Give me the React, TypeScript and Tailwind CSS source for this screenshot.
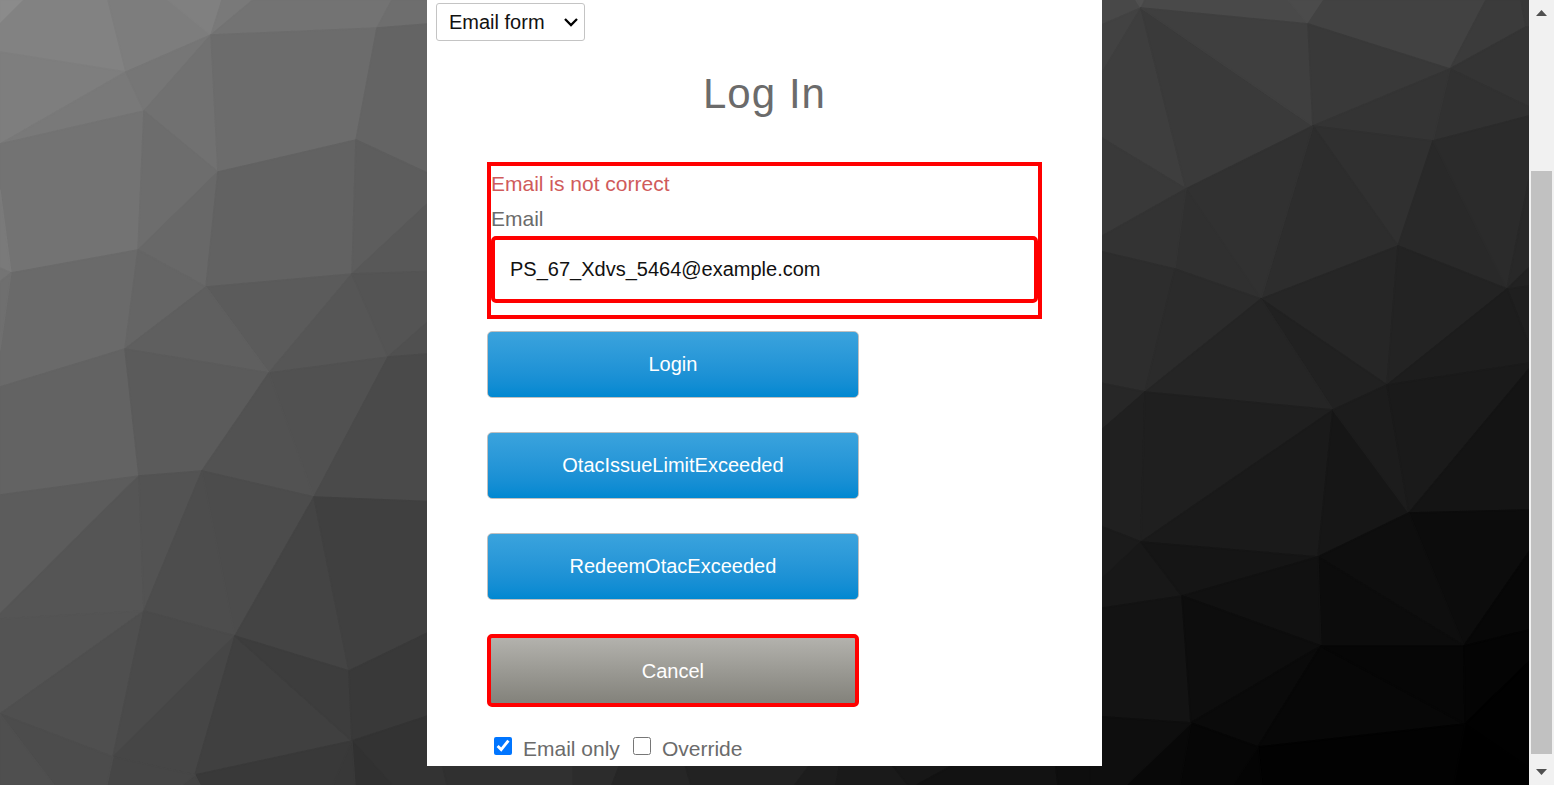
import { useState } from "react";

type Facet = [points: string, fill: string];

const facets: Facet[] = [
  ["0,0 24,0 0,24", "#8b8b8b"],
  ["24,0 108,0 126,72 0,52 0,24", "#828282"],
  ["108,0 168,0 211,35 126,72", "#7d7d7d"],
  ["168,0 222,0 211,35", "#808080"],
  ["222,0 253,0 211,35", "#797979"],
  ["253,0 392,0 377,28 211,35", "#737373"],
  ["392,0 440,0 440,23 377,28", "#6e6e6e"],
  ["0,52 126,72 0,144", "#7e7e7e"],
  ["0,144 126,72 144,111", "#797979"],
  ["126,72 211,35 144,111", "#767676"],
  ["144,111 211,35 218,172", "#717171"],
  ["211,35 377,28 356,140 218,172", "#6c6c6c"],
  ["377,28 440,23 440,179 356,140", "#646464"],
  ["0,144 144,111 138,250 11,273 0,190", "#737373"],
  ["0,190 11,273 0,268", "#7a7a7a"],
  ["0,268 11,273 0,282", "#747474"],
  ["144,111 218,172 138,250", "#6d6d6d"],
  ["138,250 218,172 206,287", "#686868"],
  ["218,172 356,140 352,274 206,287", "#626262"],
  ["356,140 440,179 440,192 352,274", "#5d5d5d"],
  ["352,274 440,192 440,271", "#585858"],
  ["11,273 138,250 125,349 0,387 0,350", "#6a6a6a"],
  ["0,282 11,273 0,350", "#6f6f6f"],
  ["138,250 206,287 125,349", "#656565"],
  ["206,287 352,274 269,373", "#5b5b5b"],
  ["125,349 206,287 269,373", "#5f5f5f"],
  ["352,274 388,357 269,373", "#565656"],
  ["352,274 440,271 440,311 388,357", "#545454"],
  ["388,357 440,311 440,353", "#505050"],
  ["269,373 388,357 314,497", "#515151"],
  ["0,387 125,349 139,476 0,495", "#636363"],
  ["125,349 269,373 202,471 139,476", "#5b5b5b"],
  ["269,373 314,497 202,471", "#525252"],
  ["388,357 440,353 440,502 314,497", "#4a4a4a"],
  ["0,495 139,476 0,614", "#5c5c5c"],
  ["139,476 144,611 0,619 0,614", "#555555"],
  ["139,476 202,471 144,611", "#535353"],
  ["202,471 314,497 235,636", "#4c4c4c"],
  ["202,471 235,636 144,611", "#4d4d4d"],
  ["314,497 349,671 235,636", "#444444"],
  ["314,497 440,502 440,627 349,671", "#404040"],
  ["0,619 144,611 0,714", "#545454"],
  ["0,714 144,611 113,757", "#4f4f4f"],
  ["144,611 235,636 113,757", "#4a4a4a"],
  ["113,757 235,636 195,775", "#464646"],
  ["235,636 352,741 195,775", "#404040"],
  ["235,636 349,671 352,741", "#3d3d3d"],
  ["349,671 440,627 440,712 352,741", "#393939"],
  ["352,741 440,712 447,785 392,785", "#333333"],
  ["352,741 392,785 355,785", "#313131"],
  ["352,741 355,785 333,785", "#383838"],
  ["195,775 352,741 333,785 200,785", "#393939"],
  ["195,775 200,785 182,785", "#434343"],
  ["113,757 195,775 182,785 107,785", "#464646"],
  ["0,714 113,757 107,785 54,785", "#4c4c4c"],
  ["0,714 54,785 0,785", "#4f4f4f"],
  ["440,712 440,755 447,785 573,785 573,712", "#303030"],
  ["573,712 640,712 612,785 573,785", "#2c2c2c"],
  ["640,712 670,712 691,785 612,785", "#262626"],
  ["670,712 850,712 795,785 691,785", "#222222"],
  ["850,712 836,785 795,785", "#1d1d1d"],
  ["850,712 908,785 836,785", "#1a1a1a"],
  ["850,712 1050,712 917,785 908,785", "#171717"],
  ["1050,712 1058,785 917,785", "#121212"],
  ["1050,712 1102,717 1102,785 1058,785", "#0e0e0e"],
  ["1090,0 1136,0 1141,8 1090,30", "#484848"],
  ["1136,0 1145,0 1141,8", "#505050"],
  ["1145,0 1288,0 1308,24 1141,8", "#494949"],
  ["1288,0 1324,0 1308,24", "#4b4b4b"],
  ["1324,0 1486,0 1450,69 1308,24", "#424242"],
  ["1486,0 1521,0 1526,27 1450,69", "#3b3b3b"],
  ["1521,0 1529,0 1529,27 1526,27", "#383838"],
  ["1526,27 1529,27 1529,107 1450,69", "#343434"],
  ["1450,69 1529,107 1529,116 1433,141", "#313131"],
  ["1090,30 1141,8 1090,93", "#424242"],
  ["1090,93 1141,8 1186,189 1090,131", "#3e3e3e"],
  ["1141,8 1313,126 1186,189", "#3a3a3a"],
  ["1141,8 1308,24 1313,126", "#3f3f3f"],
  ["1308,24 1450,69 1313,126", "#393939"],
  ["1313,126 1450,69 1433,141", "#343434"],
  ["1313,126 1433,141 1398,246", "#303030"],
  ["1313,126 1398,246 1261,299", "#2d2d2d"],
  ["1186,189 1313,126 1261,299", "#313131"],
  ["1186,189 1261,299 1175,269", "#303030"],
  ["1090,131 1186,189 1090,243", "#393939"],
  ["1090,243 1186,189 1175,269 1090,249", "#333333"],
  ["1090,249 1175,269 1145,392 1090,381", "#2d2d2d"],
  ["1175,269 1261,299 1145,392", "#2b2b2b"],
  ["1433,141 1507,289 1398,246", "#292929"],
  ["1433,141 1529,116 1529,180 1507,289", "#2b2b2b"],
  ["1529,180 1529,268 1507,289", "#282828"],
  ["1507,289 1529,268 1529,286", "#222222"],
  ["1398,246 1387,385 1261,299", "#262626"],
  ["1398,246 1507,289 1387,385", "#232323"],
  ["1261,299 1387,385 1333,410", "#212121"],
  ["1261,299 1333,410 1145,392", "#252525"],
  ["1507,289 1529,286 1529,345", "#1f1f1f"],
  ["1507,289 1529,345 1529,363 1387,385", "#1d1d1d"],
  ["1090,381 1145,392 1090,440", "#272727"],
  ["1090,440 1145,392 1141,542 1090,522", "#202020"],
  ["1145,392 1333,410 1141,542", "#1f1f1f"],
  ["1333,410 1318,557 1141,542", "#1a1a1a"],
  ["1333,410 1409,513 1318,557", "#161616"],
  ["1333,410 1387,385 1409,513", "#1c1c1c"],
  ["1387,385 1529,363 1529,369 1409,513", "#1a1a1a"],
  ["1409,513 1529,369 1529,510", "#141414"],
  ["1409,513 1529,510 1529,552 1464,646", "#0c0c0c"],
  ["1409,513 1464,646 1318,557", "#0e0e0e"],
  ["1318,557 1464,646 1321,646", "#0c0c0c"],
  ["1090,522 1141,542 1090,590", "#1b1b1b"],
  ["1090,590 1141,542 1182,596 1090,610", "#181818"],
  ["1141,542 1318,557 1182,596", "#151515"],
  ["1182,596 1318,557 1321,646", "#111111"],
  ["1090,610 1182,596 1191,723 1090,716", "#131313"],
  ["1182,596 1321,646 1191,723", "#0d0d0d"],
  ["1191,723 1321,646 1258,747", "#0a0a0a"],
  ["1321,646 1465,724 1258,747", "#070707"],
  ["1321,646 1464,646 1465,724", "#060606"],
  ["1464,646 1529,552 1529,630", "#070707"],
  ["1464,646 1529,630 1529,662 1465,724", "#040404"],
  ["1465,724 1529,662 1529,768", "#010101"],
  ["1258,747 1465,724 1454,785 1262,785", "#020202"],
  ["1258,747 1262,785 1233,785", "#040404"],
  ["1191,723 1258,747 1233,785 1180,785", "#060606"],
  ["1191,723 1180,785 1126,785", "#080808"],
  ["1090,716 1191,723 1126,785 1090,785", "#0e0e0e"],
];

function Backdrop() {
  return (
    <svg
      aria-hidden="true"
      className="absolute inset-0 h-full w-full"
      viewBox="0 0 1529 785"
      preserveAspectRatio="xMidYMid slice"
    >
      {facets.map(([points, fill]) => (
        <polygon
          key={points}
          points={points}
          fill={fill}
          stroke={fill}
          strokeWidth="1.5"
          strokeLinejoin="round"
        />
      ))}
    </svg>
  );
}

function ScrollRail() {
  return (
    <div aria-hidden="true" className="flex w-[25px] shrink-0 flex-col items-center bg-[#f1f1f1]">
      <svg className="h-[25px] w-[25px] shrink-0" viewBox="0 0 25 25" fill="#505050">
        <path d="M7 16 L12.5 10 L18 16 Z" />
      </svg>
      <div className="flex w-full grow flex-col px-0.5">
        <div className="grow-[146]" />
        <div className="grow-[583] bg-[#c1c1c1]" />
        <div className="grow-[6]" />
      </div>
      <svg className="h-[25px] w-[25px] shrink-0" viewBox="0 0 25 25" fill="#505050">
        <path d="M7 9 L12.5 15 L18 9 Z" />
      </svg>
    </div>
  );
}

const primaryButton =
  "h-[67px] w-[67%] rounded-[5px] border border-[#c0c0c0] bg-linear-to-b from-[#3aa3dd] to-[#0088d1] pb-0.5 text-[20px] text-white";

const checkbox = "mx-px mt-[6px] size-[18px] accent-[#0075ff]";

export default function App() {
  const [email, setEmail] = useState("PS_67_Xdvs_5464@example.com");
  const [emailOnly, setEmailOnly] = useState(true);
  const [override, setOverride] = useState(false);

  return (
    <div className="flex min-h-screen bg-black font-['Liberation_Sans',Arial,sans-serif] text-[21px] text-[#6b6b6b]">
      <div className="relative flex grow items-start justify-center bg-black">
        <Backdrop />
        <main className="relative w-full max-w-[675px] bg-white pt-[3px]">
          <div className="px-[9px]">
            <div className="relative inline-block align-top">
              <select
                aria-label="Form type"
                className="block h-[38px] w-[149px] appearance-none rounded-[3px] border border-[#c4c4c4] bg-white pl-3 text-[20px] text-[#111]"
              >
                <option>Email form</option>
              </select>
              <svg
                aria-hidden="true"
                className="pointer-events-none absolute top-[14px] right-[6px] h-[10px] w-[16px]"
                viewBox="0 0 16 10"
                fill="none"
                stroke="#000"
                strokeWidth="2.3"
              >
                <path d="M2 2 L8 8 L14 2" />
              </svg>
            </div>
          </div>

          <h1 className="mt-7 text-center text-[42px] leading-[50px] tracking-wide">Log In</h1>

          <form className="mt-[43px] px-[60px]" onSubmit={(e) => e.preventDefault()}>
            <div className="border-4 border-[#f00] pb-3 leading-[35px]">
              <p className="text-[#d05b5b]">Email is not correct</p>
              <label htmlFor="email" className="block">
                Email
              </label>
              <input
                id="email"
                type="email"
                value={email}
                onChange={(e) => setEmail(e.target.value)}
                className="block h-[67px] w-full rounded-[5px] border-4 border-[#f00] bg-white px-[15px] text-[20px] text-[#111]"
              />
            </div>

            <div className="mt-3 flex flex-col gap-[34px]">
              <button type="submit" className={primaryButton}>
                Login
              </button>
              <button type="button" className={primaryButton}>
                OtacIssueLimitExceeded
              </button>
              <button type="button" className={primaryButton}>
                RedeemOtacExceeded
              </button>
              <button
                type="button"
                className="h-[73px] w-[67%] rounded-[5px] border-4 border-[#f00] bg-linear-to-b from-[#b3b2ad] to-[#83827b] text-[20px] text-white"
              >
                Cancel
              </button>
            </div>

            <div className="mt-6 flex items-start gap-3 pl-[6px] leading-[35px]">
              <label className="flex items-start gap-[10px]">
                <input
                  type="checkbox"
                  checked={emailOnly}
                  onChange={(e) => setEmailOnly(e.target.checked)}
                  className={checkbox}
                />
                Email only
              </label>
              <label className="flex items-start gap-[10px]">
                <input
                  type="checkbox"
                  checked={override}
                  onChange={(e) => setOverride(e.target.checked)}
                  className={checkbox}
                />
                Override
              </label>
            </div>
          </form>
        </main>
      </div>
      <ScrollRail />
    </div>
  );
}
